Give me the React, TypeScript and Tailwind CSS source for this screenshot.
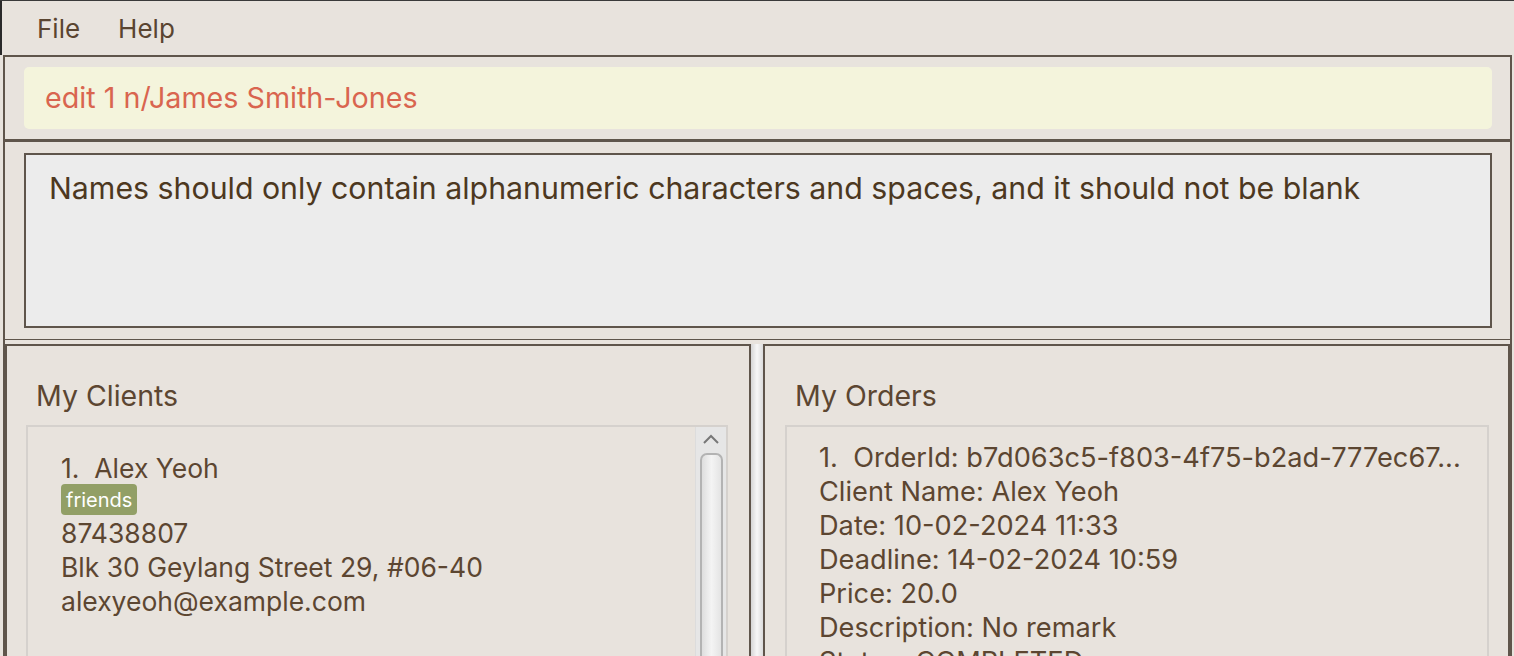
import React from "react";

export default function App() {
  const orderLines = [
    "Client Name: Alex Yeoh",
    "Date: 10-02-2024 11:33",
    "Deadline: 14-02-2024 10:59",
    "Price: 20.0",
    "Description: No remark",
    "Status: COMPLETED",
  ];
  return (
    <div
      className="w-[1514px] h-[656px] overflow-hidden bg-[#e8e3dd] border-t border-[#3a3a3a] flex flex-col"
      style={{ fontFamily: "Inter, 'Noto Sans', sans-serif" }}
    >
      {/* Menu bar */}
      <div className="h-[54px] shrink-0 flex items-center pl-[35px] gap-[38px] text-[26px] text-[#5a4531] border-l-2 border-[#2a2a2a]">
        <span>File</span>
        <span>Help</span>
      </div>

      {/* Main area */}
      <div className="flex-1 flex flex-col ml-[3px] mr-[2px] border-x-2 border-t-2 border-[#5f554b] min-h-0">
        {/* Command box */}
        <div className="pt-[10px] pb-[10px] pl-[19px] pr-[18px] border-b-[3px] border-[#5f554b]">
          <div className="h-[62px] rounded-[5px] bg-[#f4f4dc] flex items-center pl-[21px] text-[28.7px] text-[#d9654f]">
            edit 1 n/James Smith-Jones
          </div>
        </div>

        {/* Result box */}
        <div className="pt-[11px] pb-[11px] pl-[19px] pr-[18px] border-b border-[#5f554b]">
          <div className="h-[175px] border-2 border-[#5f554b] bg-[#ececec] pl-[23px] pt-[13px] text-[30.3px] text-[#4d381f] leading-[40px] whitespace-nowrap">
            Names should only contain alphanumeric characters and spaces, and it should not be blank
          </div>
        </div>

        {/* Panels */}
        <div className="flex-1 flex pt-[4px] min-h-0">
          {/* Left panel */}
          <div className="w-[746px] border-2 border-b-0 border-[#5f554b] flex flex-col min-h-0">
            <div className="h-[79px] shrink-0 flex items-center pl-[29px] pt-[22px] text-[28.5px] text-[#5c4631]">
              My Clients
            </div>
            <div className="flex-1 ml-[19px] mr-[21px] border-2 border-b-0 border-[#d5d1cd] flex min-h-0">
              <div className="flex-1 pl-[33px] pt-[26px] text-[26.5px] text-[#5c4631] leading-[34px]">
                <div className="leading-[30px]">1.&nbsp;&nbsp;Alex Yeoh</div>
                <div className="h-[33px] flex items-center">
                  <span className="inline-flex items-center h-[31px] px-[5px] rounded-[4px] bg-[#929f66] text-white text-[20px] leading-none">
                    friends
                  </span>
                </div>
                <div>87438807</div>
                <div>Blk 30 Geylang Street 29, #06-40</div>
                <div>alexyeoh@example.com</div>
              </div>
              {/* Scrollbar */}
              <div className="w-[31px] bg-[#e6e6e6] border-l border-[#dcdcdc] flex flex-col items-center">
                <svg width="20" height="26" viewBox="0 0 20 26" className="shrink-0">
                  <path d="M3 16 L10 9 L17 16" fill="none" stroke="#777" strokeWidth="2" />
                </svg>
                <div className="w-[23px] flex-1 rounded-t-[7px] border-2 border-b-0 border-[#b3b3b3] bg-gradient-to-r from-[#dedede] via-[#f4f4f4] to-[#e4e4e4]" />
              </div>
            </div>
          </div>

          {/* Splitter */}
          <div className="w-[12px] bg-gradient-to-r from-[#d6d6d6] via-[#f7f7f7] to-[#dcdcdc]" />

          {/* Right panel */}
          <div className="flex-1 border-2 border-b-0 border-[#5f554b] flex flex-col min-h-0">
            <div className="h-[79px] shrink-0 flex items-center pl-[30px] pt-[22px] text-[28.5px] text-[#5c4631]">
              My Orders
            </div>
            <div className="flex-1 ml-[20px] mr-[19px] border-2 border-b-0 border-[#d5d1cd] min-h-0 overflow-hidden">
              <div className="pl-[32px] pt-[14px] text-[27.2px] text-[#5c4631] leading-[34px]">
                <div className="whitespace-nowrap">1.&nbsp;&nbsp;OrderId: b7d063c5-f803-4f75-b2ad-777ec67...</div>
                {orderLines.map((l) => (
                  <div key={l} className="whitespace-nowrap">{l}</div>
                ))}
              </div>
            </div>
          </div>
        </div>
      </div>
    </div>
  );
}
